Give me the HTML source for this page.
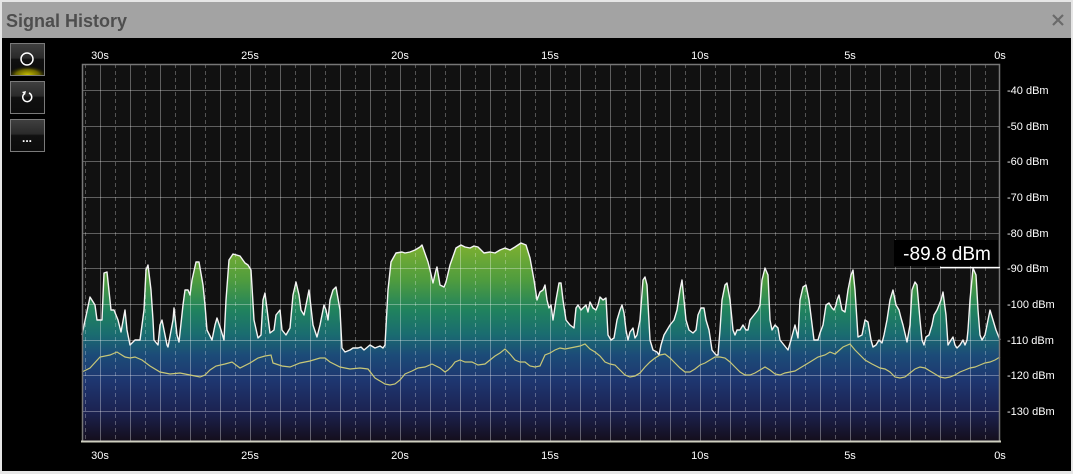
<!DOCTYPE html>
<html><head><meta charset="utf-8"><style>
html,body{margin:0;padding:0;width:1073px;height:474px;overflow:hidden;background:#e6e6e6;font-family:"Liberation Sans",sans-serif}
svg{position:absolute;left:0;top:0}
</style></head><body>
<svg width="1073" height="474" viewBox="0 0 1073 474" xmlns="http://www.w3.org/2000/svg">
<defs>
<linearGradient id="fg" x1="0" y1="240" x2="0" y2="441" gradientUnits="userSpaceOnUse">
<stop offset="0" stop-color="#82b22e"/>
<stop offset="0.2" stop-color="#4f9c3e"/>
<stop offset="0.35" stop-color="#20825e"/>
<stop offset="0.47" stop-color="#1a6c70"/>
<stop offset="0.57" stop-color="#1c4c78"/>
<stop offset="0.7" stop-color="#1e3670"/>
<stop offset="0.85" stop-color="#1c2352"/>
<stop offset="1" stop-color="#140e1c"/>
</linearGradient>
<linearGradient id="btn" x1="0" y1="0" x2="0" y2="1">
<stop offset="0" stop-color="#404040"/><stop offset="0.45" stop-color="#2a2a2a"/><stop offset="0.5" stop-color="#101010"/><stop offset="1" stop-color="#0c0c0c"/>
</linearGradient>
<radialGradient id="glow" cx="0.5" cy="1" r="0.6">
<stop offset="0" stop-color="#c8c000"/><stop offset="0.6" stop-color="#6a6400"/><stop offset="1" stop-color="#1a1a00" stop-opacity="0"/>
</radialGradient>
</defs>
<rect x="0" y="0" width="1073" height="474" fill="#e6e6e6"/>
<rect x="2" y="2" width="1069" height="36" fill="#a3a3a3"/>
<text x="6" y="27" font-size="18" font-weight="bold" fill="#4e4e4e">Signal History</text>
<path d="M1053 15 L1063 25 M1063 15 L1053 25" stroke="#6a6a6a" stroke-width="2.2"/>
<rect x="2" y="38" width="1069" height="433" fill="#000"/>

<!-- buttons -->
<rect x="10.5" y="43.5" width="34" height="32" fill="url(#btn)" stroke="#7a7a7a"/>
<rect x="11" y="60" width="33" height="15" fill="url(#glow)"/>
<circle cx="27" cy="59" r="6" fill="none" stroke="#fff" stroke-width="1.5"/>
<rect x="10.5" y="81.5" width="34" height="32" fill="url(#btn)" stroke="#7a7a7a"/>
<path d="M24 94 A4.5 4.5 0 1 0 29 93" fill="none" stroke="#fff" stroke-width="1.5"/>
<path d="M22 92 L25 95 L26 91 Z" fill="#fff"/>
<rect x="10.5" y="119.5" width="34" height="32" fill="url(#btn)" stroke="#7a7a7a"/>
<text x="27" y="142" font-size="12" fill="#fff" text-anchor="middle" font-weight="bold">...</text>

<!-- plot bg -->
<rect x="82" y="64" width="918" height="377" fill="#111"/>

<path fill="url(#fg)" stroke="none" d="M82 441 L82 335 L90 297 L95 305 L97 320 L102 320 L104 273 L107 272 L111 310 L114 310 L118 320 L121 332 L125 310 L127 330 L130 345 L135 340 L140 340 L144 310 L146 270 L148 265 L151 290 L153 320 L154 340 L158 345 L160 325 L162 320 L165 335 L167 345 L168 347 L173 320 L174 308 L177 335 L179 342 L183 305 L185 290 L188 290 L190 295 L192 280 L196 262 L199 262 L203 285 L205 305 L207 330 L212 340 L215 325 L217 318 L221 330 L224 340 L226 300 L229 260 L233 254 L240 256 L245 263 L248 265 L251 270 L254 320 L258 338 L261 335 L263 300 L265 293 L270 333 L274 330 L276 315 L280 310 L282 330 L286 335 L290 328 L293 295 L296 282 L299 295 L301 310 L304 315 L307 300 L309 290 L313 325 L317 337 L320 325 L322 315 L324 305 L326 310 L328 320 L330 300 L333 290 L336 287 L340 310 L342 348 L345 352 L350 350 L353 348 L358 348 L361 347 L364 350 L370 345 L375 348 L380 346 L383 348 L385 345 L388 290 L391 262 L396 253 L402 252 L405 253 L410 252 L415 250 L420 247 L422 245 L428 262 L430 270 L433 283 L436 270 L437 267 L440 285 L444 287 L446 282 L450 265 L456 248 L461 245 L465 247 L470 248 L474 246 L478 247 L484 253 L490 252 L495 253 L500 250 L505 248 L510 250 L515 247 L521 243 L526 245 L530 258 L534 280 L537 300 L540 292 L543 290 L545 285 L547 300 L549 308 L551 305 L553 320 L556 300 L559 283 L561 283 L563 300 L566 320 L570 325 L574 328 L576 308 L578 305 L581 310 L583 308 L586 305 L588 312 L590 302 L593 308 L596 310 L598 305 L600 297 L603 300 L606 298 L608 335 L611 340 L614 338 L617 320 L620 310 L622 305 L624 313 L626 330 L628 340 L630 332 L633 328 L635 338 L637 335 L640 320 L643 280 L645 277 L647 285 L650 340 L653 350 L657 352 L659 355 L661 345 L664 335 L667 330 L670 325 L674 320 L677 310 L680 290 L682 280 L684 300 L686 320 L689 330 L693 333 L696 330 L698 315 L701 308 L704 308 L706 320 L709 330 L712 350 L716 355 L718 355 L720 330 L722 300 L725 285 L727 283 L730 300 L733 330 L735 335 L737 330 L740 330 L743 325 L746 330 L748 330 L750 320 L754 315 L758 310 L760 305 L762 280 L765 268 L768 275 L770 320 L772 330 L775 325 L778 328 L780 340 L784 345 L788 350 L791 340 L795 325 L798 338 L800 300 L803 287 L806 285 L809 300 L814 340 L818 340 L820 333 L823 325 L826 305 L829 303 L832 308 L834 310 L836 305 L837 300 L839 295 L842 310 L845 312 L848 290 L851 275 L853 270 L855 290 L858 337 L862 335 L865 320 L868 322 L871 340 L873 347 L876 345 L879 340 L882 343 L884 335 L887 320 L890 300 L893 290 L896 305 L899 310 L901 318 L903 325 L907 342 L910 325 L912 290 L915 282 L917 285 L920 320 L922 340 L924 345 L926 337 L929 335 L932 325 L934 315 L937 310 L939 305 L941 300 L943 292 L946 315 L948 345 L951 340 L953 337 L955 345 L957 348 L960 345 L963 340 L965 345 L967 340 L968 330 L970 300 L973 268 L976 275 L978 310 L980 335 L982 340 L985 335 L987 325 L990 310 L993 320 L996 330 L1000 340 L1000 441 Z"/>

<!-- grid -->
<g stroke="rgba(255,255,255,0.28)" stroke-width="1" stroke-dasharray="4,3" id="dash">
<path d="M85.5 64V441M115.5 64V441M145.5 64V441M175.5 64V441M205.5 64V441M235.5 64V441M265.5 64V441M295.5 64V441M325.5 64V441M355.5 64V441M385.5 64V441M415.5 64V441M445.5 64V441M475.5 64V441M505.5 64V441M535.5 64V441M565.5 64V441M595.5 64V441M625.5 64V441M655.5 64V441M685.5 64V441M715.5 64V441M745.5 64V441M775.5 64V441M805.5 64V441M835.5 64V441M865.5 64V441M895.5 64V441M925.5 64V441M955.5 64V441M985.5 64V441"/>
</g>
<g stroke="rgba(255,255,255,0.33)" stroke-width="1">
<path d="M100.5 64V441M130.5 64V441M160.5 64V441M190.5 64V441M220.5 64V441M250.5 64V441M280.5 64V441M310.5 64V441M340.5 64V441M370.5 64V441M400.5 64V441M430.5 64V441M460.5 64V441M490.5 64V441M520.5 64V441M550.5 64V441M580.5 64V441M610.5 64V441M640.5 64V441M670.5 64V441M700.5 64V441M730.5 64V441M760.5 64V441M790.5 64V441M820.5 64V441M850.5 64V441M880.5 64V441M910.5 64V441M940.5 64V441M970.5 64V441"/>
<path d="M82 90.5H1000M82 126.5H1000M82 161.5H1000M82 197.5H1000M82 233.5H1000M82 268.5H1000M82 304.5H1000M82 340.5H1000M82 375.5H1000M82 411.5H1000"/>
</g>

<!-- signal line -->
<path fill="none" stroke="#f4f4f4" stroke-width="1.4" stroke-linejoin="round" d="M82 335 L90 297 L95 305 L97 320 L102 320 L104 273 L107 272 L111 310 L114 310 L118 320 L121 332 L125 310 L127 330 L130 345 L135 340 L140 340 L144 310 L146 270 L148 265 L151 290 L153 320 L154 340 L158 345 L160 325 L162 320 L165 335 L167 345 L168 347 L173 320 L174 308 L177 335 L179 342 L183 305 L185 290 L188 290 L190 295 L192 280 L196 262 L199 262 L203 285 L205 305 L207 330 L212 340 L215 325 L217 318 L221 330 L224 340 L226 300 L229 260 L233 254 L240 256 L245 263 L248 265 L251 270 L254 320 L258 338 L261 335 L263 300 L265 293 L270 333 L274 330 L276 315 L280 310 L282 330 L286 335 L290 328 L293 295 L296 282 L299 295 L301 310 L304 315 L307 300 L309 290 L313 325 L317 337 L320 325 L322 315 L324 305 L326 310 L328 320 L330 300 L333 290 L336 287 L340 310 L342 348 L345 352 L350 350 L353 348 L358 348 L361 347 L364 350 L370 345 L375 348 L380 346 L383 348 L385 345 L388 290 L391 262 L396 253 L402 252 L405 253 L410 252 L415 250 L420 247 L422 245 L428 262 L430 270 L433 283 L436 270 L437 267 L440 285 L444 287 L446 282 L450 265 L456 248 L461 245 L465 247 L470 248 L474 246 L478 247 L484 253 L490 252 L495 253 L500 250 L505 248 L510 250 L515 247 L521 243 L526 245 L530 258 L534 280 L537 300 L540 292 L543 290 L545 285 L547 300 L549 308 L551 305 L553 320 L556 300 L559 283 L561 283 L563 300 L566 320 L570 325 L574 328 L576 308 L578 305 L581 310 L583 308 L586 305 L588 312 L590 302 L593 308 L596 310 L598 305 L600 297 L603 300 L606 298 L608 335 L611 340 L614 338 L617 320 L620 310 L622 305 L624 313 L626 330 L628 340 L630 332 L633 328 L635 338 L637 335 L640 320 L643 280 L645 277 L647 285 L650 340 L653 350 L657 352 L659 355 L661 345 L664 335 L667 330 L670 325 L674 320 L677 310 L680 290 L682 280 L684 300 L686 320 L689 330 L693 333 L696 330 L698 315 L701 308 L704 308 L706 320 L709 330 L712 350 L716 355 L718 355 L720 330 L722 300 L725 285 L727 283 L730 300 L733 330 L735 335 L737 330 L740 330 L743 325 L746 330 L748 330 L750 320 L754 315 L758 310 L760 305 L762 280 L765 268 L768 275 L770 320 L772 330 L775 325 L778 328 L780 340 L784 345 L788 350 L791 340 L795 325 L798 338 L800 300 L803 287 L806 285 L809 300 L814 340 L818 340 L820 333 L823 325 L826 305 L829 303 L832 308 L834 310 L836 305 L837 300 L839 295 L842 310 L845 312 L848 290 L851 275 L853 270 L855 290 L858 337 L862 335 L865 320 L868 322 L871 340 L873 347 L876 345 L879 340 L882 343 L884 335 L887 320 L890 300 L893 290 L896 305 L899 310 L901 318 L903 325 L907 342 L910 325 L912 290 L915 282 L917 285 L920 320 L922 340 L924 345 L926 337 L929 335 L932 325 L934 315 L937 310 L939 305 L941 300 L943 292 L946 315 L948 345 L951 340 L953 337 L955 345 L957 348 L960 345 L963 340 L965 345 L967 340 L968 330 L970 300 L973 268 L976 275 L978 310 L980 335 L982 340 L985 335 L987 325 L990 310 L993 320 L996 330 L1000 340"/>

<!-- average line -->
<path fill="none" stroke="#c8c878" stroke-width="1.2" d="M82 372 L90 368 L100 357 L110 355 L117 352 L125 357 L130 358 L135 357 L142 360 L150 366 L160 372 L170 374 L180 373 L190 375 L200 377 L205 375 L210 370 L216 366 L225 364 L232 362 L240 368 L250 363 L258 358 L265 356 L271 355 L273 363 L282 366 L290 367 L300 363 L310 361 L320 358 L325 358 L330 362 L340 367 L350 369 L360 368 L368 369 L375 378 L385 384 L390 385 L395 384 L400 380 L405 374 L412 371 L418 368 L425 367 L432 364 L440 368 L445 372 L448 370 L452 366 L455 362 L460 360 L465 362 L472 362 L478 365 L485 364 L490 360 L495 356 L500 353 L505 349 L510 354 L515 360 L520 362 L525 362 L530 366 L535 367 L540 366 L545 355 L550 353 L555 350 L560 348 L565 349 L570 348 L575 347 L580 346 L585 344 L590 349 L595 352 L600 356 L605 362 L610 364 L615 365 L620 370 L625 375 L630 377 L635 376 L640 373 L645 367 L650 362 L655 358 L660 355 L665 354 L670 358 L675 363 L680 368 L685 372 L690 372 L695 369 L700 365 L705 363 L710 360 L715 357 L720 357 L725 358 L730 362 L735 367 L740 372 L745 375 L750 375 L755 373 L760 370 L765 367 L770 370 L775 374 L780 375 L785 373 L790 372 L795 371 L800 368 L810 362 L818 357 L825 355 L830 352 L835 354 L843 347 L850 344 L855 350 L860 355 L865 360 L872 364 L880 368 L885 369 L890 372 L895 377 L900 378 L905 377 L910 373 L915 369 L920 367 L925 368 L930 371 L935 374 L940 377 L945 378 L950 377 L955 375 L960 372 L965 370 L970 368 L975 367 L980 365 L985 363 L990 362 L995 360 L1000 357"/>

<!-- plot border -->
<path d="M82.5 441V64.5H999.5V441" fill="none" stroke="#777" stroke-width="1.5"/>
<path d="M81 441.5H1001" stroke="#cfcfc0" stroke-width="2"/>

<!-- readout -->
<rect x="894" y="240" width="104" height="26" fill="#000"/>
<text x="947" y="260" font-size="19" fill="#fff" text-anchor="middle">-89.8 dBm</text>
<path d="M940 267.5H1000" stroke="#fff" stroke-width="1.2"/>

<!-- axis labels -->
<g font-size="11" fill="#fff" text-anchor="middle">
<text x="100" y="59">30s</text><text x="250" y="59">25s</text><text x="400" y="59">20s</text><text x="550" y="59">15s</text><text x="700" y="59">10s</text><text x="850" y="59">5s</text><text x="1000" y="59">0s</text>
<text x="100" y="459">30s</text><text x="250" y="459">25s</text><text x="400" y="459">20s</text><text x="550" y="459">15s</text><text x="700" y="459">10s</text><text x="850" y="459">5s</text><text x="1000" y="459">0s</text>
</g>
<g font-size="11" fill="#fff">
<text x="1007" y="94">-40 dBm</text><text x="1007" y="130">-50 dBm</text><text x="1007" y="165">-60 dBm</text><text x="1007" y="201">-70 dBm</text><text x="1007" y="237">-80 dBm</text><text x="1007" y="272">-90 dBm</text><text x="1007" y="308">-100 dBm</text><text x="1007" y="344">-110 dBm</text><text x="1007" y="379">-120 dBm</text><text x="1007" y="415">-130 dBm</text>
</g>
</svg>
</body></html>
